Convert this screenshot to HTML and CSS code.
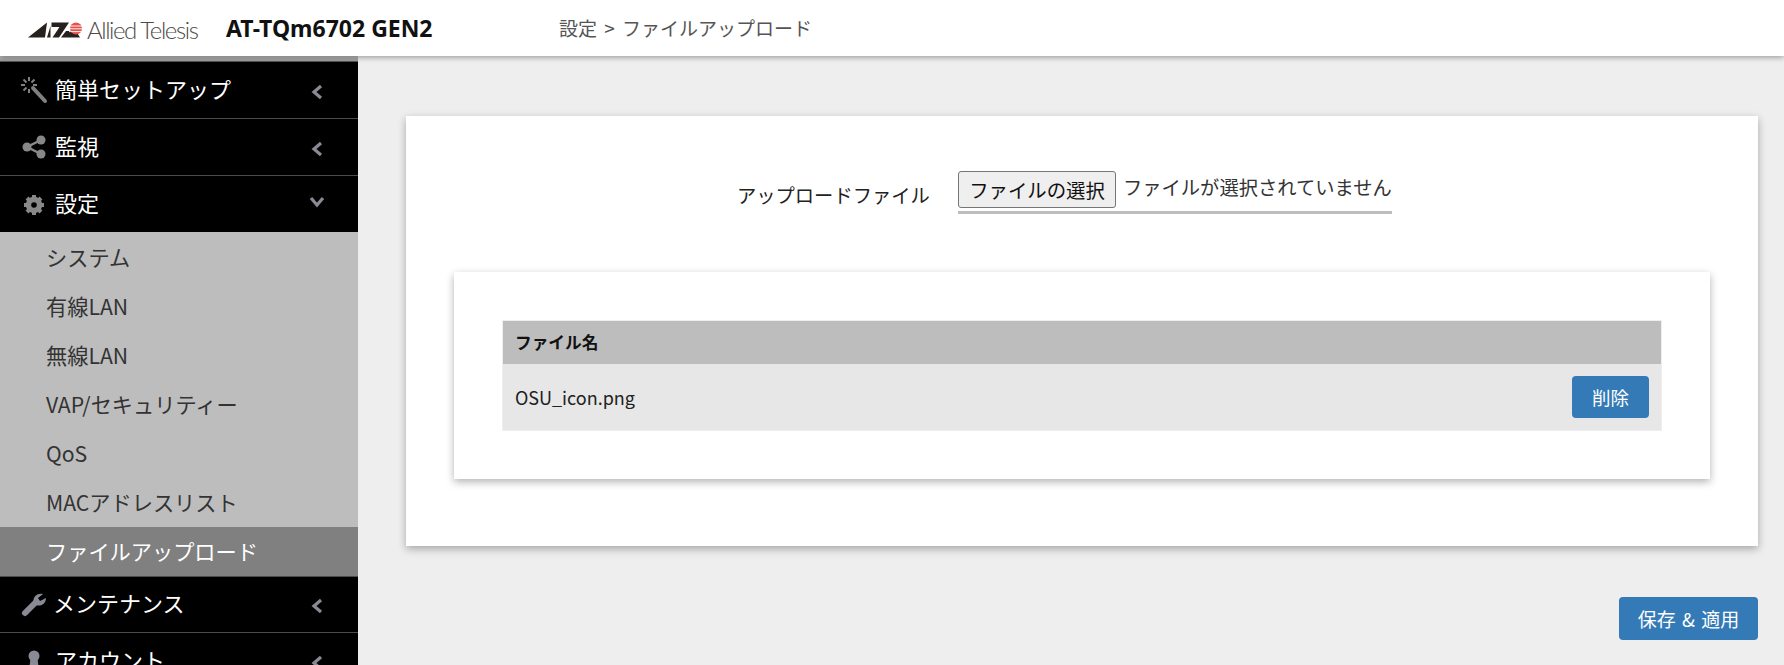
FILE: index.html
```html
<!DOCTYPE html>
<html lang="ja">
<head>
<meta charset="utf-8">
<title>ファイルアップロード</title>
<link rel="stylesheet" href="styles.css">
</head>
<body>
<header class="topbar">
  <div class="logo">
    <svg class="logo-mark" viewBox="0 0 60 24" width="60" height="24" aria-hidden="true">
      <path d="M2 19.500 L21 4.500 L19 19.500Z" fill="#26211f"/>
      <path d="M21 19.500 L24.500 8 V19.500Z" fill="#26211f"/>
      <path d="M25.500 4.500 H43 L33 19.500 H26.500 L33.500 9 H25.500Z" fill="#26211f"/>
      <path d="M35 19.500 L40 13 H50 L54 19.500Z" fill="#26211f"/>
      <circle cx="50" cy="10.500" r="6" fill="#e5524c"/>
      <path d="M43 8 H57 M43 10.800 H57 M43 13.600 H57" stroke="#fff" stroke-width=".9" fill="none"/>
    </svg>
    <span class="logo-text">Allied Telesis</span>
  </div>
  <div class="model">AT-TQm6702 GEN2</div>
  <div class="crumb">設定 &gt; ファイルアップロード</div>
</header>
<div class="main">
  <nav class="sidebar">
    <div class="item">
      <span class="item-icon">
        <svg viewBox="0 0 28 28" width="28" height="28"><path d="M13 12 L25 25" stroke="#808080" stroke-width="4" stroke-linecap="round"/><path d="M9 1v4M9 13v4M1 9h4M13 9h4M3.500 3.500l3 3M14.500 3.500l-3 3M3.500 14.500l3-3" stroke="#808080" stroke-width="2"/></svg>
      </span>
      <span class="item-label">簡単セットアップ</span>
      <svg class="chev" viewBox="0 0 14 16" width="14" height="16"><path d="M11 2 L4 8 L11 14" stroke="#8a8a96" stroke-width="3.200" fill="none"/></svg>
    </div>
    <div class="item">
      <span class="item-icon">
        <svg viewBox="0 0 28 28" width="28" height="28"><path d="M21 7 L7 14 L21 21" stroke="#888" stroke-width="2.500" fill="none"/><circle cx="21" cy="7" r="4.500" fill="#888"/><circle cx="7" cy="14" r="4.500" fill="#888"/><circle cx="21" cy="21" r="4.500" fill="#888"/></svg>
      </span>
      <span class="item-label">監視</span>
      <svg class="chev" viewBox="0 0 14 16" width="14" height="16"><path d="M11 2 L4 8 L11 14" stroke="#8a8a96" stroke-width="3.200" fill="none"/></svg>
    </div>
    <div class="item item-open">
      <span class="item-icon">
        <svg viewBox="0 0 28 28" width="28" height="28"><circle cx="14" cy="15" r="6" fill="none" stroke="#888" stroke-width="4.500"/><path d="M14 5v20M4 15h20M7 8l14 14M21 8L7 22" stroke="#888" stroke-width="4"/><circle cx="14" cy="15" r="2.800" fill="#000"/></svg>
      </span>
      <span class="item-label">設定</span>
      <svg class="chev chev-down" viewBox="0 0 16 14" width="16" height="14"><path d="M2 3 L8 10 L14 3" stroke="#8a8a96" stroke-width="3.200" fill="none"/></svg>
    </div>
    <ul class="submenu">
      <li>システム</li>
      <li>有線LAN</li>
      <li>無線LAN</li>
      <li>VAP/セキュリティー</li>
      <li>QoS</li>
      <li>MACアドレスリスト</li>
      <li class="current">ファイルアップロード</li>
    </ul>
    <div class="item item-low">
      <span class="item-icon">
        <svg viewBox="0 0 28 28" width="28" height="28"><path d="M5 23 L15 13" stroke="#8a8a96" stroke-width="6" stroke-linecap="round"/><path d="M14 14 C12 8 16 3 23 4 L18 8 L20 11 L26 8 C26 14 20 18 14 14Z" fill="#8a8a96"/></svg>
      </span>
      <span class="item-label item-label-tight">メンテナンス</span>
      <svg class="chev" viewBox="0 0 14 16" width="14" height="16"><path d="M11 2 L4 8 L11 14" stroke="#8a8a96" stroke-width="3.200" fill="none"/></svg>
    </div>
    <div class="item">
      <span class="item-icon">
        <svg viewBox="0 0 28 28" width="28" height="28"><circle cx="14" cy="9" r="5.500" fill="#8a8a96"/><path d="M10.500 12h7l2 14H8.500Z" fill="#8a8a96"/></svg>
      </span>
      <span class="item-label">アカウント</span>
      <svg class="chev" viewBox="0 0 14 16" width="14" height="16"><path d="M11 2 L4 8 L11 14" stroke="#8a8a96" stroke-width="3.200" fill="none"/></svg>
    </div>
  </nav>
  <main class="content">
    <section class="panel">
      <div class="upload-row">
        <span class="upload-label">アップロードファイル</span>
        <div class="file-field">
          <button class="file-btn" type="button">ファイルの選択</button>
          <span class="file-status">ファイルが選択されていません</span>
        </div>
      </div>
      <div class="card">
        <table class="file-table">
          <thead><tr><th>ファイル名</th><th></th></tr></thead>
          <tbody>
            <tr><td>OSU_icon.png</td><td class="action"><button class="btn btn-del" type="button">削除</button></td></tr>
          </tbody>
        </table>
      </div>
    </section>
    <div class="footer-actions"><button class="btn btn-save" type="button">保存 &amp; 適用</button></div>
  </main>
</div>
</body>
</html>
```
FILE: styles.css
```css
* { box-sizing: border-box; }
html, body { margin: 0; height: 100%; overflow: hidden; }
body {
  background: #eeeeee;
  color: #222;
  font-family: "Noto Sans CJK JP", "Noto Sans", sans-serif;
  display: flex;
  flex-direction: column;
}
.topbar {
  height: 56px;
  flex: none;
  background: #fff;
  display: flex;
  align-items: center;
  box-shadow: 0 1px 6px rgba(0,0,0,.4);
  position: relative;
  z-index: 2;
}
.logo { width: 226px; padding-left: 26px; display: flex; align-items: center; flex: none; height: 100%; }
.logo-mark { flex: none; margin-top: 4px; margin-right: 1px; }
.logo-text { font-family: "Lato", "Liberation Sans", sans-serif; font-weight: 300; font-size: 24px; letter-spacing: -1.400px; color: #4e4a48; white-space: nowrap; margin-top: 2px; }
.model { width: 333px; flex: none; font-family: "Noto Sans", sans-serif; font-weight: 700; font-size: 23px; color: #111; }
.crumb { font-size: 19px; color: #555; word-spacing: 3px; margin-top: -2px; }
.main { flex: 1; display: flex; min-height: 0; }
.sidebar {
  width: 358px;
  flex: none;
  padding-top: 6px;
  background: linear-gradient(#bdbdbd, #9a9a9a 5px, #555 5px, #555 6px, #000 6px) no-repeat top / 100% 6px, #000;
}
.item {
  height: 57px;
  display: flex;
  align-items: center;
  padding-left: 20px;
  color: #fff;
  border-bottom: 1px solid #4a4a52;
}
.item-open { border-bottom: 0; height: 56px; }
.item-low { height: 56px; }
.item-icon { width: 35px; flex: none; display: flex; }
.item-label { font-size: 22px; flex: 1; margin-top: -4px; }
.item-label-tight { margin-left: -2px; }
.chev { flex: none; margin-right: 34px; margin-top: 4px; }
.chev-down { margin-right: 33px; margin-top: -4px; }
.submenu { list-style: none; margin: 0; padding: 0; background: #bdbdbd; color: #333; font-size: 21.200px; }
.submenu li { height: 49.170px; display: flex; align-items: center; padding-left: 46px; padding-bottom: 1px; }
.submenu li.current { background: #808080; color: #fff; height: 50px; border-bottom: 1px solid #4a4a52; }
.content { flex: 1; min-width: 0; padding: 60px 26px 0 48px; }
.panel { height: 430px; background: #fff; box-shadow: 0 3px 8px rgba(0,0,0,.3); padding: 55px 48px 0; }
.upload-row { display: flex; height: 101px; }
.upload-label { margin-left: 283px; width: 221px; flex: none; font-size: 19.300px; padding-top: 8px; line-height: 32px; color: #222; }
.file-field { width: 434px; height: 43px; border-bottom: 3px solid #bdbdbd; display: flex; }
.file-btn { width: 158px; height: 37px; font: inherit; font-size: 19.400px; padding: 0; color: #111; background: #efefef; border: 1px solid #767676; border-radius: 3px; }
.file-status { margin-left: 7px; font-size: 19.300px; line-height: 32px; color: #333; white-space: nowrap; }
.card { height: 207px; background: #fff; box-shadow: 0 3px 8px rgba(0,0,0,.3); padding: 48px; }
.file-table { width: 100%; border-collapse: collapse; border: 1px solid #eee; font-size: 18px; }
.file-table th { height: 43px; background: #bdbdbd; color: #111; text-align: left; font-weight: 700; font-size: 16.700px; padding: 0 12px; }
.file-table td { height: 67px; background: #e7e7e8; padding: 0 12px; color: #222; }
.file-table .action { text-align: right; }
.btn { background: #337ab7; color: #fff; border: 0; border-radius: 4px; font: inherit; padding: 0; display: inline-block; vertical-align: middle; }
.btn-del { width: 77px; height: 42px; font-size: 18.500px; }
.footer-actions { display: flex; justify-content: flex-end; margin-top: 51px; }
.btn-save { width: 139px; height: 43px; font-size: 19px; word-spacing: 2px; }
```
